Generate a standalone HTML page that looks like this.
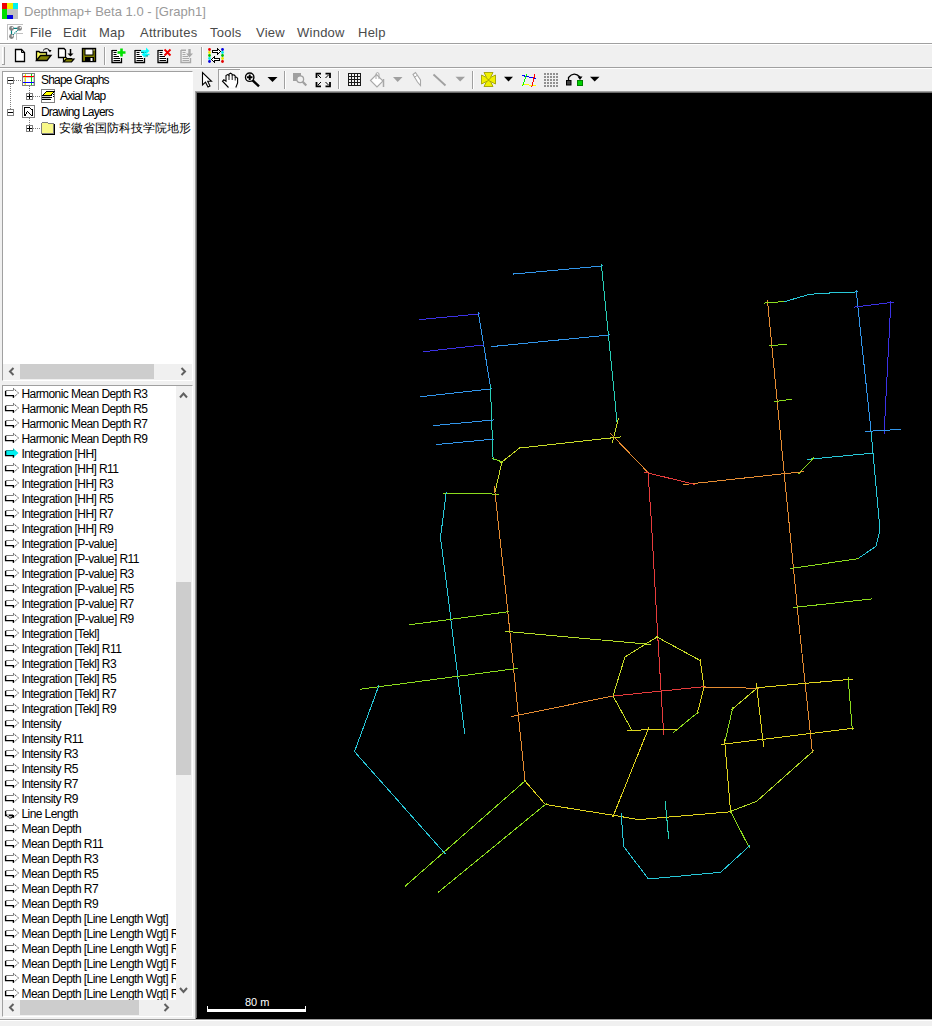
<!DOCTYPE html>
<html><head><meta charset="utf-8">
<style>
*{margin:0;padding:0;box-sizing:border-box}
html,body{width:932px;height:1026px;overflow:hidden;background:#f0f0f0;font-family:"Liberation Sans",sans-serif;position:relative}
.a{position:absolute}
.t{position:absolute;white-space:nowrap;line-height:1}
#title{left:0;top:0;width:932px;height:22px;background:#fff}
#menubar{left:0;top:22px;width:932px;height:21px;background:#fff}
.mi{position:absolute;top:25.5px;font-size:13px;letter-spacing:0.25px;color:#4a4a4a;white-space:nowrap;line-height:1}
.hl{position:absolute;left:0;width:932px;height:1px}
.panel{position:absolute;background:#fff;border-top:1px solid #a0a0a0;border-left:1px solid #a0a0a0;border-right:1px solid #fff;border-bottom:1px solid #fff}
.sbh{position:absolute;background:#f0f0f0}
.thumb{position:absolute;background:#cdcdcd}
.li{position:absolute;left:18.5px;font-size:12px;letter-spacing:-0.58px;color:#000;white-space:nowrap;line-height:1}
.tr{position:absolute;font-size:12px;letter-spacing:-0.8px;color:#000;white-space:nowrap;line-height:1}
</style></head>
<body>
<div id="title" class="a"></div>
<div class="t" style="left:24px;top:5px;font-size:13px;color:#9a9a9a">Depthmap+ Beta 1.0 - [Graph1]</div>
<svg class="a" style="left:0;top:0" width="30" height="42" viewBox="0 0 30 42" shape-rendering="crispEdges">
<rect x="2" y="3" width="16" height="16" fill="#c0c0c0"/>
<rect x="2" y="3" width="5" height="6" fill="#f00000"/><rect x="7" y="3" width="6" height="6" fill="#f0f000"/><rect x="13" y="3" width="5" height="6" fill="#00f0f0"/>
<rect x="2" y="9" width="5" height="10" fill="#00e000"/><rect x="7" y="15" width="6" height="4" fill="#0000e0"/>
</svg>
<div id="menubar" class="a"></div>
<svg class="a" style="left:4px;top:22px" width="22" height="20" viewBox="4 22 22 20">
<g shape-rendering="crispEdges" stroke="#c0c0c0"><path d="M7.5 24V40M7 24.5H23M16.5 33V40M16 33.5H23"/></g>
<path d="M11.5 28.4H19.5M11.5 28.4V36.5" stroke="#008080" stroke-width="1.2"/>
<path d="M19.5 28.4L11.5 36.5" stroke="#008080" stroke-width="1.2" stroke-dasharray="1.2 0.8"/>
<g fill="#808080"><circle cx="11.5" cy="28.4" r="2.4"/><circle cx="19.5" cy="28.4" r="2.4"/><circle cx="11.5" cy="36.5" r="2.4"/></g>
<g fill="#fff"><circle cx="12.3" cy="27.8" r="0.8"/><circle cx="20.3" cy="27.8" r="0.8"/><circle cx="12.3" cy="35.9" r="0.8"/></g>
</svg>
<div class="mi" style="left:30px">File</div>
<div class="mi" style="left:63px">Edit</div>
<div class="mi" style="left:99px">Map</div>
<div class="mi" style="left:140px">Attributes</div>
<div class="mi" style="left:210px">Tools</div>
<div class="mi" style="left:256px">View</div>
<div class="mi" style="left:297px">Window</div>
<div class="mi" style="left:358px">Help</div>
<div class="hl" style="top:43px;background:#a0a0a0"></div>
<div class="hl" style="top:44px;background:#fff"></div>
<div class="hl" style="top:67px;background:#a0a0a0"></div>
<div class="hl" style="top:68px;background:#fff"></div>

<!-- main toolbar -->
<svg class="a" style="left:0;top:44px" width="240" height="24" viewBox="0 44 240 24">
<g shape-rendering="crispEdges">
<path d="M2.5 47V65M3 64.5H5" stroke="#fff"/><path d="M4.5 47V65M2 64.5H5" stroke="#a0a0a0"/>
<path d="M104.5 47V65M201.5 47V65" stroke="#a0a0a0"/><path d="M105.5 47V65M202.5 47V65" stroke="#fff"/>
</g>
<!-- new -->
<path d="M15.5 49.5H21.5L24.5 52.5V61.5H15.5Z" fill="#fff" stroke="#000" stroke-width="1.3"/>
<path d="M21.5 49.5V52.5H24.5" fill="none" stroke="#000"/>
<!-- open -->
<path d="M36.5 60.5V51.5H39L40 52.5H46.5V55" fill="#ffff60" stroke="#000" stroke-width="1.3"/>
<path d="M36.5 60.5L40.5 55.5H51L47 60.5Z" fill="#808000" stroke="#000" stroke-width="1.3"/>
<path d="M43 50.5Q46 47 49.5 50" fill="none" stroke="#000"/><path d="M48 50H51.5L50 52.5Z" fill="#000"/>
<!-- import -->
<path d="M58.5 48.5H64L65.5 50V57.5H58.5Z" fill="#fff" stroke="#000" stroke-width="1.3"/>
<path d="M70.5 49V54.5" stroke="#000" stroke-width="1.5"/><path d="M67.5 53.5H73.5L70.5 56.5Z" fill="#000"/>
<path d="M63.5 62V57.5H66L67 58.5H71.5V60" fill="#ffff60" stroke="#000" stroke-width="1.2"/>
<path d="M63.5 62L66 59H74L71.5 62Z" fill="#808000" stroke="#000" stroke-width="1.2"/>
<!-- save -->
<rect x="82.5" y="48.5" width="13" height="13" fill="#808000" stroke="#000" stroke-width="1.4"/>
<rect x="85" y="49" width="8" height="6" fill="#fff" stroke="#000"/>
<rect x="85" y="57" width="9" height="5" fill="#000"/><rect x="90.5" y="58" width="2" height="3" fill="#fff"/>
<rect x="93.5" y="49.5" width="1" height="1" fill="#fff"/>
<!-- doc icons -->
<rect x="112.5" y="50.5" width="8" height="11" fill="#fff"/>
<path d="M112 50V62.5H121.5V58" fill="none" stroke="#000" stroke-width="1.3"/><path d="M112 50.5H117" stroke="#000" stroke-width="1.2"/>
<path d="M113.5 52.5H116.5M113.5 54.5H116.5M113.5 56.5H119M113.5 58.5H120M113.5 60.5H120" stroke="#000"/>
<path d="M121.5 48.5V56.5M117.5 52.5H125.5" stroke="#00e000" stroke-width="2.6"/>
<rect x="135.5" y="50.5" width="8" height="11" fill="#fff"/>
<path d="M135 50V62.5H144.5V58" fill="none" stroke="#000" stroke-width="1.3"/><path d="M135 50.5H141" stroke="#000" stroke-width="1.2"/>
<path d="M136.5 52.5H139.5M136.5 54.5H139.5M136.5 56.5H142M136.5 58.5H143M136.5 60.5H143" stroke="#000"/>
<path d="M141 52.3H146.5M143.5 55.8H148" stroke="#008080" stroke-width="1.2"/><path d="M141 51H147M143.5 54.5H149.5" stroke="#00ffff" stroke-width="1.6"/><path d="M146 47.5L149.5 51L146 54Z" fill="#00ffff"/><path d="M145.5 51.3L141.5 54.5L145.5 57.8Z" fill="#00ffff"/>
<rect x="158.5" y="50.5" width="8" height="11" fill="#fff"/>
<path d="M158 50V62.5H167.5V58" fill="none" stroke="#000" stroke-width="1.3"/><path d="M158 50.5H163" stroke="#000" stroke-width="1.2"/>
<path d="M159.5 52.5H162.5M159.5 54.5H162.5M159.5 56.5H165M159.5 58.5H166M159.5 60.5H166" stroke="#000"/>
<path d="M164.5 49.5L170.5 55.5M170.5 49.5L164.5 55.5" stroke="#f00000" stroke-width="1.9"/>
<path d="M181 50V62.5H190.5V58M181 50.3H186" fill="none" stroke="#a8a8a8" stroke-width="1.4"/>
<path d="M182.5 52.5H185.5M182.5 54.5H185.5M182.5 56.5H188M182.5 58.5H189M182.5 60.5H189" stroke="#a8a8a8"/>
<path d="M189.5 49V54" stroke="#a8a8a8" stroke-width="2.4"/><path d="M186 53.5H193L189.5 57.5Z" fill="#a8a8a8"/>
<!-- colour icon -->
<g stroke-width="0"><circle cx="209.5" cy="49.5" r="1.4" fill="#f00000"/><circle cx="209.5" cy="52.5" r="1.4" fill="#e8e800"/><circle cx="209.5" cy="55.5" r="1.4" fill="#00c000"/><circle cx="209.5" cy="58.5" r="1.4" fill="#00e8e8"/><circle cx="209.5" cy="61.5" r="1.4" fill="#0000e0"/>
<circle cx="222.5" cy="49.5" r="1.4" fill="#0000e0"/><circle cx="222.5" cy="52.5" r="1.4" fill="#00e8e8"/><circle cx="222.5" cy="55.5" r="1.4" fill="#00c000"/><circle cx="222.5" cy="58.5" r="1.4" fill="#e8e800"/><circle cx="222.5" cy="61.5" r="1.4" fill="#e00000"/></g>
<path d="M212.5 50.5H217.5V48.5L220.5 51.5L217.5 54.5V52.5H212.5Z" fill="#fff" stroke="#000" shape-rendering="crispEdges"/>
<path d="M219.5 58.5H214.5V56.5L211.5 59.5L214.5 62.5V60.5H219.5Z" fill="#fff" stroke="#000" shape-rendering="crispEdges"/>
</svg>
<!-- canvas toolbar -->
<svg class="a" style="left:196px;top:69px" width="420" height="22" viewBox="196 69 420 22">
<g shape-rendering="crispEdges">
<rect x="218" y="69" width="22" height="21" fill="#f8f8f8"/>
<path d="M218.5 69V90M218 69.5H240" stroke="#a0a0a0"/><path d="M239.5 70V90M219 89.5H240" stroke="#fff"/>
<path d="M284.5 71V89M338.5 71V89M472.5 71V89" stroke="#a0a0a0"/><path d="M285.5 71V89M339.5 71V89M473.5 71V89" stroke="#fff"/>
</g>
<path d="M202.5 72.5V85L205.5 82.2L208 87L210 86L207.7 81.3H211.5Z" fill="#fff" stroke="#000" stroke-width="1.1"/>
<path d="M228.5 87.5L222.5 81.2L223.8 79.8L226 81.3V75.5L227.6 74.6L229 75.5V74L230.6 73.2L232.2 74.2V75L234 74.8L235.2 76V77L236.6 77.2L237.6 78.5V83L235.8 87.5" fill="#fff" stroke="#000" stroke-width="1.1"/>
<path d="M229 75.5V80M232.2 75V80M235.2 77V80.5" stroke="#000" stroke-width="0.9"/>
<circle cx="249.7" cy="77.2" r="4.2" fill="#fff" stroke="#000" stroke-width="1.4"/>
<path d="M249.7 74.5V80M247 77.2H252.5" stroke="#000" stroke-width="2"/>
<path d="M252.6 80.3L259 86.3" stroke="#000" stroke-width="2.4"/>
<path d="M267.5 77H277.5L272.5 82Z" fill="#000"/>
<!-- disabled zoom sel -->
<rect x="293" y="73" width="8" height="8" fill="#a0a0a0"/>
<circle cx="300.2" cy="79.3" r="3.4" fill="#f0f0f0" stroke="#a0a0a0" stroke-width="1.3"/>
<path d="M302.7 81.8L306.3 85.6" stroke="#a0a0a0" stroke-width="2.2"/>
<!-- fit -->
<g fill="none" stroke="#000" stroke-width="1.8">
<path d="M316.5 78V73.7H321M330 78V73.7H325.5M316.5 82V86.3H321M330 82V86.3H325.5"/>
</g>
<g stroke="#000" stroke-width="1"><path d="M318 75L321 78M328.5 75L325.5 78M318 85L321 82M328.5 85L325.5 82"/></g>
<!-- grid -->
<g stroke="#1a1a1a" stroke-width="1" shape-rendering="crispEdges"><path d="M348.5 73V85M351.5 73V85M354.5 73V85M357.5 73V85M360.5 73V85M348 73.5H361M348 76.5H361M348 79.5H361M348 82.5H361M348 85.5H361"/></g>
<!-- bucket -->
<path d="M370.5 80.5L376.5 74.5L383 81L377 87Z" fill="#fff" stroke="#a8a8a8" stroke-width="1.1"/>
<path d="M376 79V73.5Q377.5 71.5 379 73.5V79" fill="none" stroke="#a8a8a8"/>
<path d="M383.5 79V87" stroke="#a8a8a8" stroke-width="1.5"/>
<path d="M393 77H402.5L397.7 82Z" fill="#a0a0a0"/>
<!-- pencil -->
<path d="M413 74.5L415.5 72.5L420.5 80V85.5L417.5 82Z" fill="#fff" stroke="#a8a8a8" stroke-width="1.1"/>
<path d="M414 77.5L417 75.5" stroke="#a8a8a8"/>
<path d="M433.5 74.5L445.5 85.5" stroke="#a0a0a0" stroke-width="1.8"/>
<path d="M455.5 76.7H465L460.2 81.5Z" fill="#a0a0a0"/>
<!-- yellow cross -->
<path d="M484 72.5H493L490.5 77.5L495.5 75V84L490.5 81.5L493 86.5H484L486.5 81.5L481.5 84V75L486.5 77.5Z" fill="#f0f000" stroke="#a0a000" stroke-width="0.9"/>
<path d="M486.5 78L490.5 82M490.5 78L486.5 82" stroke="#808000" stroke-width="0.7"/>
<path d="M504 76.7H513L508.5 81.5Z" fill="#000"/>
<!-- coloured square -->
<g stroke-width="1.1" shape-rendering="crispEdges"><path d="M522 75.5L536 78.5" stroke="#0000ff"/><path d="M522 84L536 86" stroke="#ffff00"/><path d="M526.7 74L522.5 86.5" stroke="#00ff00"/><path d="M534.8 74.5L531.8 86.8" stroke="#ff0000"/></g>
<!-- dot grid -->
<g fill="#909090">
<rect x="544" y="73" width="2" height="2"/><rect x="547" y="73" width="2" height="2"/><rect x="550" y="73" width="2" height="2"/><rect x="553" y="73" width="2" height="2"/><rect x="556" y="73" width="2" height="2"/>
<rect x="544" y="76" width="2" height="2"/><rect x="547" y="76" width="2" height="2"/><rect x="550" y="76" width="2" height="2"/><rect x="553" y="76" width="2" height="2"/><rect x="556" y="76" width="2" height="2"/>
<rect x="544" y="79" width="2" height="2"/><rect x="547" y="79" width="2" height="2"/><rect x="550" y="79" width="2" height="2"/><rect x="553" y="79" width="2" height="2"/><rect x="556" y="79" width="2" height="2"/>
<rect x="544" y="82" width="2" height="2"/><rect x="547" y="82" width="2" height="2"/><rect x="550" y="82" width="2" height="2"/><rect x="553" y="82" width="2" height="2"/><rect x="556" y="82" width="2" height="2"/>
<rect x="544" y="85" width="2" height="2"/><rect x="547" y="85" width="2" height="2"/><rect x="550" y="85" width="2" height="2"/><rect x="553" y="85" width="2" height="2"/><rect x="556" y="85" width="2" height="2"/>
</g>
<!-- link -->
<path d="M568.5 80V77.5Q574 71 580 77" fill="none" stroke="#000" stroke-width="1.3"/><path d="M577.5 76.5H582.5L580 80Z" fill="#000"/>
<rect x="566.5" y="80.5" width="4.5" height="4.5" fill="#404040" stroke="#000"/>
<rect x="577.5" y="80.5" width="5" height="5" fill="#00d000" stroke="#008000"/>
<path d="M590 76.7H599.5L594.7 81.5Z" fill="#000"/>
</svg>
<!-- tree panel -->
<div class="panel" style="left:2px;top:71px;width:191px;height:310px"></div>
<svg class="a" style="left:0;top:70px" width="193" height="70" viewBox="0 70 193 70" shape-rendering="crispEdges">
<g stroke="#808080" stroke-dasharray="1 1" stroke-width="1" fill="none">
<path d="M10.5 84V109M14 80.5H22M29.5 86V93M33 96.5H41M29.5 118V125M33 128.5H41"/>
</g>
<g fill="#fff" stroke="#808080">
<rect x="7.5" y="77.5" width="6" height="6"/><rect x="7.5" y="109.5" width="6" height="6"/>
<rect x="26.5" y="93.5" width="6" height="6"/><rect x="26.5" y="125.5" width="6" height="6"/>
</g>
<g stroke="#000"><path d="M8 80.5H13M8 112.5H13M27 96.5H32M29.5 94V99M27 128.5H32M29.5 126V131"/></g>
<!-- shape graphs icon -->
<rect x="22.5" y="73.5" width="12" height="12" fill="#fff" stroke="#808080"/>
<path d="M24 74.5V85M33 74.5V85M23 77.5H34M23 82.5H34" stroke="#d0d0d0"/>
<path d="M25.5 74V85" stroke="#f0f000"/><path d="M31.5 74V85" stroke="#00e000"/>
<path d="M23 76.5H34" stroke="#ff0000"/><path d="M23 82.5H34" stroke="#0000ff"/>
<!-- axial map icon -->
<rect x="41.5" y="89.5" width="13" height="13" fill="#fff" stroke="#808080"/>
<path d="M42 97.5H50.5M42 99.5H50.5" stroke="#000"/><path d="M42 96.5H50M42 98.5H50" stroke="#c8c8c8"/>
<path d="M50 97.5L54 93.5M50 99.5L54 95.5" stroke="#000" stroke-dasharray="1 1"/>
<path d="M42.5 95.5L46.5 91.5H54.5L50.5 95.5Z" fill="#ffff00" stroke="#000"/>
<!-- drawing layers icon -->
<rect x="22.5" y="105.5" width="12" height="12" fill="#fff" stroke="#808080"/>
<path d="M24.5 115.5V107.5H29.5L31.5 109.5H32.5V115.5H31.5L27.5 111.5L25 115.5" fill="none" stroke="#000"/>
<!-- folder icon -->
<path d="M41.5 123.5L43 122H47L48.5 123.5H53.5V133.5H41.5Z" fill="#f8f888" stroke="#808080"/>
<path d="M42 134.5H55M54.5 124V134" stroke="#000"/>
</svg>
<div class="tr" style="left:41px;top:73.5px">Shape Graphs</div>
<div class="tr" style="left:60px;top:89.5px">Axial Map</div>
<div class="tr" style="left:41px;top:105.5px">Drawing Layers</div>
<div class="a" style="left:59px;top:121px;width:133px;height:16px;overflow:hidden;font-size:12px;line-height:14px;white-space:nowrap;color:#000">安徽省国防科技学院地形</div>
<div class="sbh" style="left:3px;top:364px;width:189px;height:16px"></div>
<div class="thumb" style="left:20px;top:364px;width:134px;height:15px"></div>

<!-- list panel -->
<div class="panel" style="left:2px;top:385px;width:191px;height:632px"></div>
<div class="sbh" style="left:176px;top:386px;width:16px;height:630px"></div>
<div class="thumb" style="left:176px;top:582px;width:15px;height:193px"></div>
<div class="sbh" style="left:3px;top:1000px;width:173px;height:16px"></div>
<div class="thumb" style="left:20px;top:1000px;width:119px;height:15px"></div>

<div class="a" style="left:3px;top:386px;width:173px;height:614px;overflow:hidden">
<div class="li" style="top:1.5px">Harmonic Mean Depth R3</div>
<div class="li" style="top:16.5px">Harmonic Mean Depth R5</div>
<div class="li" style="top:31.5px">Harmonic Mean Depth R7</div>
<div class="li" style="top:46.5px">Harmonic Mean Depth R9</div>
<div class="li" style="top:61.5px">Integration [HH]</div>
<div class="li" style="top:76.5px">Integration [HH] R11</div>
<div class="li" style="top:91.5px">Integration [HH] R3</div>
<div class="li" style="top:106.5px">Integration [HH] R5</div>
<div class="li" style="top:121.5px">Integration [HH] R7</div>
<div class="li" style="top:136.5px">Integration [HH] R9</div>
<div class="li" style="top:151.5px">Integration [P-value]</div>
<div class="li" style="top:166.5px">Integration [P-value] R11</div>
<div class="li" style="top:181.5px">Integration [P-value] R3</div>
<div class="li" style="top:196.5px">Integration [P-value] R5</div>
<div class="li" style="top:211.5px">Integration [P-value] R7</div>
<div class="li" style="top:226.5px">Integration [P-value] R9</div>
<div class="li" style="top:241.5px">Integration [Tekl]</div>
<div class="li" style="top:256.5px">Integration [Tekl] R11</div>
<div class="li" style="top:271.5px">Integration [Tekl] R3</div>
<div class="li" style="top:286.5px">Integration [Tekl] R5</div>
<div class="li" style="top:301.5px">Integration [Tekl] R7</div>
<div class="li" style="top:316.5px">Integration [Tekl] R9</div>
<div class="li" style="top:331.5px">Intensity</div>
<div class="li" style="top:346.5px">Intensity R11</div>
<div class="li" style="top:361.5px">Intensity R3</div>
<div class="li" style="top:376.5px">Intensity R5</div>
<div class="li" style="top:391.5px">Intensity R7</div>
<div class="li" style="top:406.5px">Intensity R9</div>
<div class="li" style="top:421.5px">Line Length</div>
<div class="li" style="top:436.5px">Mean Depth</div>
<div class="li" style="top:451.5px">Mean Depth R11</div>
<div class="li" style="top:466.5px">Mean Depth R3</div>
<div class="li" style="top:481.5px">Mean Depth R5</div>
<div class="li" style="top:496.5px">Mean Depth R7</div>
<div class="li" style="top:511.5px">Mean Depth R9</div>
<div class="li" style="top:526.5px">Mean Depth [Line Length Wgt]</div>
<div class="li" style="top:541.5px">Mean Depth [Line Length Wgt] R11</div>
<div class="li" style="top:556.5px">Mean Depth [Line Length Wgt] R11</div>
<div class="li" style="top:571.5px">Mean Depth [Line Length Wgt] R11</div>
<div class="li" style="top:586.5px">Mean Depth [Line Length Wgt] R11</div>
<div class="li" style="top:601.5px">Mean Depth [Line Length Wgt] R11</div>
</div>
<svg class="a" style="left:3px;top:386px" width="173" height="614" viewBox="3 386 173 614">
<g transform="translate(5 388)"><path d="M1 2.5H8.5V0.5L13.5 5L8.5 9.5V7.5H1Z" fill="#fff"/><path d="M1 2.5H8.5V0.5" fill="none" stroke="#808080" stroke-width="1"/><path d="M8.5 0.5L13.5 5L8.5 9.5" fill="none" stroke="#303030" stroke-width="1" stroke-dasharray="1.2 0.9"/><path d="M0.6 2.8V7.6H8.4V9.8" fill="none" stroke="#000" stroke-width="1.4"/></g>
<g transform="translate(5 403)"><path d="M1 2.5H8.5V0.5L13.5 5L8.5 9.5V7.5H1Z" fill="#fff"/><path d="M1 2.5H8.5V0.5" fill="none" stroke="#808080" stroke-width="1"/><path d="M8.5 0.5L13.5 5L8.5 9.5" fill="none" stroke="#303030" stroke-width="1" stroke-dasharray="1.2 0.9"/><path d="M0.6 2.8V7.6H8.4V9.8" fill="none" stroke="#000" stroke-width="1.4"/></g>
<g transform="translate(5 418)"><path d="M1 2.5H8.5V0.5L13.5 5L8.5 9.5V7.5H1Z" fill="#fff"/><path d="M1 2.5H8.5V0.5" fill="none" stroke="#808080" stroke-width="1"/><path d="M8.5 0.5L13.5 5L8.5 9.5" fill="none" stroke="#303030" stroke-width="1" stroke-dasharray="1.2 0.9"/><path d="M0.6 2.8V7.6H8.4V9.8" fill="none" stroke="#000" stroke-width="1.4"/></g>
<g transform="translate(5 433)"><path d="M1 2.5H8.5V0.5L13.5 5L8.5 9.5V7.5H1Z" fill="#fff"/><path d="M1 2.5H8.5V0.5" fill="none" stroke="#808080" stroke-width="1"/><path d="M8.5 0.5L13.5 5L8.5 9.5" fill="none" stroke="#303030" stroke-width="1" stroke-dasharray="1.2 0.9"/><path d="M0.6 2.8V7.6H8.4V9.8" fill="none" stroke="#000" stroke-width="1.4"/></g>
<g transform="translate(5 448)"><path d="M1 2.5H8.5V0.5L13.5 5L8.5 9.5V7.5H1Z" fill="#00f0f0"/><path d="M1 2.5H8.5V0.5" fill="none" stroke="#008080" stroke-width="0.8"/><path d="M0.6 2.8V7.6H8.4V9.8" fill="none" stroke="#000" stroke-width="1.4"/></g>
<g transform="translate(5 463)"><path d="M1 2.5H8.5V0.5L13.5 5L8.5 9.5V7.5H1Z" fill="#fff"/><path d="M1 2.5H8.5V0.5" fill="none" stroke="#808080" stroke-width="1"/><path d="M8.5 0.5L13.5 5L8.5 9.5" fill="none" stroke="#303030" stroke-width="1" stroke-dasharray="1.2 0.9"/><path d="M0.6 2.8V7.6H8.4V9.8" fill="none" stroke="#000" stroke-width="1.4"/></g>
<g transform="translate(5 478)"><path d="M1 2.5H8.5V0.5L13.5 5L8.5 9.5V7.5H1Z" fill="#fff"/><path d="M1 2.5H8.5V0.5" fill="none" stroke="#808080" stroke-width="1"/><path d="M8.5 0.5L13.5 5L8.5 9.5" fill="none" stroke="#303030" stroke-width="1" stroke-dasharray="1.2 0.9"/><path d="M0.6 2.8V7.6H8.4V9.8" fill="none" stroke="#000" stroke-width="1.4"/></g>
<g transform="translate(5 493)"><path d="M1 2.5H8.5V0.5L13.5 5L8.5 9.5V7.5H1Z" fill="#fff"/><path d="M1 2.5H8.5V0.5" fill="none" stroke="#808080" stroke-width="1"/><path d="M8.5 0.5L13.5 5L8.5 9.5" fill="none" stroke="#303030" stroke-width="1" stroke-dasharray="1.2 0.9"/><path d="M0.6 2.8V7.6H8.4V9.8" fill="none" stroke="#000" stroke-width="1.4"/></g>
<g transform="translate(5 508)"><path d="M1 2.5H8.5V0.5L13.5 5L8.5 9.5V7.5H1Z" fill="#fff"/><path d="M1 2.5H8.5V0.5" fill="none" stroke="#808080" stroke-width="1"/><path d="M8.5 0.5L13.5 5L8.5 9.5" fill="none" stroke="#303030" stroke-width="1" stroke-dasharray="1.2 0.9"/><path d="M0.6 2.8V7.6H8.4V9.8" fill="none" stroke="#000" stroke-width="1.4"/></g>
<g transform="translate(5 523)"><path d="M1 2.5H8.5V0.5L13.5 5L8.5 9.5V7.5H1Z" fill="#fff"/><path d="M1 2.5H8.5V0.5" fill="none" stroke="#808080" stroke-width="1"/><path d="M8.5 0.5L13.5 5L8.5 9.5" fill="none" stroke="#303030" stroke-width="1" stroke-dasharray="1.2 0.9"/><path d="M0.6 2.8V7.6H8.4V9.8" fill="none" stroke="#000" stroke-width="1.4"/></g>
<g transform="translate(5 538)"><path d="M1 2.5H8.5V0.5L13.5 5L8.5 9.5V7.5H1Z" fill="#fff"/><path d="M1 2.5H8.5V0.5" fill="none" stroke="#808080" stroke-width="1"/><path d="M8.5 0.5L13.5 5L8.5 9.5" fill="none" stroke="#303030" stroke-width="1" stroke-dasharray="1.2 0.9"/><path d="M0.6 2.8V7.6H8.4V9.8" fill="none" stroke="#000" stroke-width="1.4"/></g>
<g transform="translate(5 553)"><path d="M1 2.5H8.5V0.5L13.5 5L8.5 9.5V7.5H1Z" fill="#fff"/><path d="M1 2.5H8.5V0.5" fill="none" stroke="#808080" stroke-width="1"/><path d="M8.5 0.5L13.5 5L8.5 9.5" fill="none" stroke="#303030" stroke-width="1" stroke-dasharray="1.2 0.9"/><path d="M0.6 2.8V7.6H8.4V9.8" fill="none" stroke="#000" stroke-width="1.4"/></g>
<g transform="translate(5 568)"><path d="M1 2.5H8.5V0.5L13.5 5L8.5 9.5V7.5H1Z" fill="#fff"/><path d="M1 2.5H8.5V0.5" fill="none" stroke="#808080" stroke-width="1"/><path d="M8.5 0.5L13.5 5L8.5 9.5" fill="none" stroke="#303030" stroke-width="1" stroke-dasharray="1.2 0.9"/><path d="M0.6 2.8V7.6H8.4V9.8" fill="none" stroke="#000" stroke-width="1.4"/></g>
<g transform="translate(5 583)"><path d="M1 2.5H8.5V0.5L13.5 5L8.5 9.5V7.5H1Z" fill="#fff"/><path d="M1 2.5H8.5V0.5" fill="none" stroke="#808080" stroke-width="1"/><path d="M8.5 0.5L13.5 5L8.5 9.5" fill="none" stroke="#303030" stroke-width="1" stroke-dasharray="1.2 0.9"/><path d="M0.6 2.8V7.6H8.4V9.8" fill="none" stroke="#000" stroke-width="1.4"/></g>
<g transform="translate(5 598)"><path d="M1 2.5H8.5V0.5L13.5 5L8.5 9.5V7.5H1Z" fill="#fff"/><path d="M1 2.5H8.5V0.5" fill="none" stroke="#808080" stroke-width="1"/><path d="M8.5 0.5L13.5 5L8.5 9.5" fill="none" stroke="#303030" stroke-width="1" stroke-dasharray="1.2 0.9"/><path d="M0.6 2.8V7.6H8.4V9.8" fill="none" stroke="#000" stroke-width="1.4"/></g>
<g transform="translate(5 613)"><path d="M1 2.5H8.5V0.5L13.5 5L8.5 9.5V7.5H1Z" fill="#fff"/><path d="M1 2.5H8.5V0.5" fill="none" stroke="#808080" stroke-width="1"/><path d="M8.5 0.5L13.5 5L8.5 9.5" fill="none" stroke="#303030" stroke-width="1" stroke-dasharray="1.2 0.9"/><path d="M0.6 2.8V7.6H8.4V9.8" fill="none" stroke="#000" stroke-width="1.4"/></g>
<g transform="translate(5 628)"><path d="M1 2.5H8.5V0.5L13.5 5L8.5 9.5V7.5H1Z" fill="#fff"/><path d="M1 2.5H8.5V0.5" fill="none" stroke="#808080" stroke-width="1"/><path d="M8.5 0.5L13.5 5L8.5 9.5" fill="none" stroke="#303030" stroke-width="1" stroke-dasharray="1.2 0.9"/><path d="M0.6 2.8V7.6H8.4V9.8" fill="none" stroke="#000" stroke-width="1.4"/></g>
<g transform="translate(5 643)"><path d="M1 2.5H8.5V0.5L13.5 5L8.5 9.5V7.5H1Z" fill="#fff"/><path d="M1 2.5H8.5V0.5" fill="none" stroke="#808080" stroke-width="1"/><path d="M8.5 0.5L13.5 5L8.5 9.5" fill="none" stroke="#303030" stroke-width="1" stroke-dasharray="1.2 0.9"/><path d="M0.6 2.8V7.6H8.4V9.8" fill="none" stroke="#000" stroke-width="1.4"/></g>
<g transform="translate(5 658)"><path d="M1 2.5H8.5V0.5L13.5 5L8.5 9.5V7.5H1Z" fill="#fff"/><path d="M1 2.5H8.5V0.5" fill="none" stroke="#808080" stroke-width="1"/><path d="M8.5 0.5L13.5 5L8.5 9.5" fill="none" stroke="#303030" stroke-width="1" stroke-dasharray="1.2 0.9"/><path d="M0.6 2.8V7.6H8.4V9.8" fill="none" stroke="#000" stroke-width="1.4"/></g>
<g transform="translate(5 673)"><path d="M1 2.5H8.5V0.5L13.5 5L8.5 9.5V7.5H1Z" fill="#fff"/><path d="M1 2.5H8.5V0.5" fill="none" stroke="#808080" stroke-width="1"/><path d="M8.5 0.5L13.5 5L8.5 9.5" fill="none" stroke="#303030" stroke-width="1" stroke-dasharray="1.2 0.9"/><path d="M0.6 2.8V7.6H8.4V9.8" fill="none" stroke="#000" stroke-width="1.4"/></g>
<g transform="translate(5 688)"><path d="M1 2.5H8.5V0.5L13.5 5L8.5 9.5V7.5H1Z" fill="#fff"/><path d="M1 2.5H8.5V0.5" fill="none" stroke="#808080" stroke-width="1"/><path d="M8.5 0.5L13.5 5L8.5 9.5" fill="none" stroke="#303030" stroke-width="1" stroke-dasharray="1.2 0.9"/><path d="M0.6 2.8V7.6H8.4V9.8" fill="none" stroke="#000" stroke-width="1.4"/></g>
<g transform="translate(5 703)"><path d="M1 2.5H8.5V0.5L13.5 5L8.5 9.5V7.5H1Z" fill="#fff"/><path d="M1 2.5H8.5V0.5" fill="none" stroke="#808080" stroke-width="1"/><path d="M8.5 0.5L13.5 5L8.5 9.5" fill="none" stroke="#303030" stroke-width="1" stroke-dasharray="1.2 0.9"/><path d="M0.6 2.8V7.6H8.4V9.8" fill="none" stroke="#000" stroke-width="1.4"/></g>
<g transform="translate(5 718)"><path d="M1 2.5H8.5V0.5L13.5 5L8.5 9.5V7.5H1Z" fill="#fff"/><path d="M1 2.5H8.5V0.5" fill="none" stroke="#808080" stroke-width="1"/><path d="M8.5 0.5L13.5 5L8.5 9.5" fill="none" stroke="#303030" stroke-width="1" stroke-dasharray="1.2 0.9"/><path d="M0.6 2.8V7.6H8.4V9.8" fill="none" stroke="#000" stroke-width="1.4"/></g>
<g transform="translate(5 733)"><path d="M1 2.5H8.5V0.5L13.5 5L8.5 9.5V7.5H1Z" fill="#fff"/><path d="M1 2.5H8.5V0.5" fill="none" stroke="#808080" stroke-width="1"/><path d="M8.5 0.5L13.5 5L8.5 9.5" fill="none" stroke="#303030" stroke-width="1" stroke-dasharray="1.2 0.9"/><path d="M0.6 2.8V7.6H8.4V9.8" fill="none" stroke="#000" stroke-width="1.4"/></g>
<g transform="translate(5 748)"><path d="M1 2.5H8.5V0.5L13.5 5L8.5 9.5V7.5H1Z" fill="#fff"/><path d="M1 2.5H8.5V0.5" fill="none" stroke="#808080" stroke-width="1"/><path d="M8.5 0.5L13.5 5L8.5 9.5" fill="none" stroke="#303030" stroke-width="1" stroke-dasharray="1.2 0.9"/><path d="M0.6 2.8V7.6H8.4V9.8" fill="none" stroke="#000" stroke-width="1.4"/></g>
<g transform="translate(5 763)"><path d="M1 2.5H8.5V0.5L13.5 5L8.5 9.5V7.5H1Z" fill="#fff"/><path d="M1 2.5H8.5V0.5" fill="none" stroke="#808080" stroke-width="1"/><path d="M8.5 0.5L13.5 5L8.5 9.5" fill="none" stroke="#303030" stroke-width="1" stroke-dasharray="1.2 0.9"/><path d="M0.6 2.8V7.6H8.4V9.8" fill="none" stroke="#000" stroke-width="1.4"/></g>
<g transform="translate(5 778)"><path d="M1 2.5H8.5V0.5L13.5 5L8.5 9.5V7.5H1Z" fill="#fff"/><path d="M1 2.5H8.5V0.5" fill="none" stroke="#808080" stroke-width="1"/><path d="M8.5 0.5L13.5 5L8.5 9.5" fill="none" stroke="#303030" stroke-width="1" stroke-dasharray="1.2 0.9"/><path d="M0.6 2.8V7.6H8.4V9.8" fill="none" stroke="#000" stroke-width="1.4"/></g>
<g transform="translate(5 793)"><path d="M1 2.5H8.5V0.5L13.5 5L8.5 9.5V7.5H1Z" fill="#fff"/><path d="M1 2.5H8.5V0.5" fill="none" stroke="#808080" stroke-width="1"/><path d="M8.5 0.5L13.5 5L8.5 9.5" fill="none" stroke="#303030" stroke-width="1" stroke-dasharray="1.2 0.9"/><path d="M0.6 2.8V7.6H8.4V9.8" fill="none" stroke="#000" stroke-width="1.4"/></g>
<g transform="translate(5 808)"><path d="M1 2.5H8.5V0.5L13.5 5L8.5 9.5V7.5H1Z" fill="#fff"/><path d="M1 2.5H8.5V0.5" fill="none" stroke="#808080" stroke-width="1"/><path d="M8.5 0.5L13.5 5L8.5 9.5" fill="none" stroke="#303030" stroke-width="1" stroke-dasharray="1.2 0.9"/><path d="M0.6 2.8V7.6H8.4V9.8" fill="none" stroke="#000" stroke-width="1.4"/><path d="M1.5 6.5L3 8.5L3.5 9.5M4 7H7.5V9L6 10H4" fill="none" stroke="#000" stroke-width="1.1"/><rect x="2" y="6" width="2" height="2" fill="#c0c0c0"/></g>
<g transform="translate(5 823)"><path d="M1 2.5H8.5V0.5L13.5 5L8.5 9.5V7.5H1Z" fill="#fff"/><path d="M1 2.5H8.5V0.5" fill="none" stroke="#808080" stroke-width="1"/><path d="M8.5 0.5L13.5 5L8.5 9.5" fill="none" stroke="#303030" stroke-width="1" stroke-dasharray="1.2 0.9"/><path d="M0.6 2.8V7.6H8.4V9.8" fill="none" stroke="#000" stroke-width="1.4"/></g>
<g transform="translate(5 838)"><path d="M1 2.5H8.5V0.5L13.5 5L8.5 9.5V7.5H1Z" fill="#fff"/><path d="M1 2.5H8.5V0.5" fill="none" stroke="#808080" stroke-width="1"/><path d="M8.5 0.5L13.5 5L8.5 9.5" fill="none" stroke="#303030" stroke-width="1" stroke-dasharray="1.2 0.9"/><path d="M0.6 2.8V7.6H8.4V9.8" fill="none" stroke="#000" stroke-width="1.4"/></g>
<g transform="translate(5 853)"><path d="M1 2.5H8.5V0.5L13.5 5L8.5 9.5V7.5H1Z" fill="#fff"/><path d="M1 2.5H8.5V0.5" fill="none" stroke="#808080" stroke-width="1"/><path d="M8.5 0.5L13.5 5L8.5 9.5" fill="none" stroke="#303030" stroke-width="1" stroke-dasharray="1.2 0.9"/><path d="M0.6 2.8V7.6H8.4V9.8" fill="none" stroke="#000" stroke-width="1.4"/></g>
<g transform="translate(5 868)"><path d="M1 2.5H8.5V0.5L13.5 5L8.5 9.5V7.5H1Z" fill="#fff"/><path d="M1 2.5H8.5V0.5" fill="none" stroke="#808080" stroke-width="1"/><path d="M8.5 0.5L13.5 5L8.5 9.5" fill="none" stroke="#303030" stroke-width="1" stroke-dasharray="1.2 0.9"/><path d="M0.6 2.8V7.6H8.4V9.8" fill="none" stroke="#000" stroke-width="1.4"/></g>
<g transform="translate(5 883)"><path d="M1 2.5H8.5V0.5L13.5 5L8.5 9.5V7.5H1Z" fill="#fff"/><path d="M1 2.5H8.5V0.5" fill="none" stroke="#808080" stroke-width="1"/><path d="M8.5 0.5L13.5 5L8.5 9.5" fill="none" stroke="#303030" stroke-width="1" stroke-dasharray="1.2 0.9"/><path d="M0.6 2.8V7.6H8.4V9.8" fill="none" stroke="#000" stroke-width="1.4"/></g>
<g transform="translate(5 898)"><path d="M1 2.5H8.5V0.5L13.5 5L8.5 9.5V7.5H1Z" fill="#fff"/><path d="M1 2.5H8.5V0.5" fill="none" stroke="#808080" stroke-width="1"/><path d="M8.5 0.5L13.5 5L8.5 9.5" fill="none" stroke="#303030" stroke-width="1" stroke-dasharray="1.2 0.9"/><path d="M0.6 2.8V7.6H8.4V9.8" fill="none" stroke="#000" stroke-width="1.4"/></g>
<g transform="translate(5 913)"><path d="M1 2.5H8.5V0.5L13.5 5L8.5 9.5V7.5H1Z" fill="#fff"/><path d="M1 2.5H8.5V0.5" fill="none" stroke="#808080" stroke-width="1"/><path d="M8.5 0.5L13.5 5L8.5 9.5" fill="none" stroke="#303030" stroke-width="1" stroke-dasharray="1.2 0.9"/><path d="M0.6 2.8V7.6H8.4V9.8" fill="none" stroke="#000" stroke-width="1.4"/></g>
<g transform="translate(5 928)"><path d="M1 2.5H8.5V0.5L13.5 5L8.5 9.5V7.5H1Z" fill="#fff"/><path d="M1 2.5H8.5V0.5" fill="none" stroke="#808080" stroke-width="1"/><path d="M8.5 0.5L13.5 5L8.5 9.5" fill="none" stroke="#303030" stroke-width="1" stroke-dasharray="1.2 0.9"/><path d="M0.6 2.8V7.6H8.4V9.8" fill="none" stroke="#000" stroke-width="1.4"/></g>
<g transform="translate(5 943)"><path d="M1 2.5H8.5V0.5L13.5 5L8.5 9.5V7.5H1Z" fill="#fff"/><path d="M1 2.5H8.5V0.5" fill="none" stroke="#808080" stroke-width="1"/><path d="M8.5 0.5L13.5 5L8.5 9.5" fill="none" stroke="#303030" stroke-width="1" stroke-dasharray="1.2 0.9"/><path d="M0.6 2.8V7.6H8.4V9.8" fill="none" stroke="#000" stroke-width="1.4"/></g>
<g transform="translate(5 958)"><path d="M1 2.5H8.5V0.5L13.5 5L8.5 9.5V7.5H1Z" fill="#fff"/><path d="M1 2.5H8.5V0.5" fill="none" stroke="#808080" stroke-width="1"/><path d="M8.5 0.5L13.5 5L8.5 9.5" fill="none" stroke="#303030" stroke-width="1" stroke-dasharray="1.2 0.9"/><path d="M0.6 2.8V7.6H8.4V9.8" fill="none" stroke="#000" stroke-width="1.4"/></g>
<g transform="translate(5 973)"><path d="M1 2.5H8.5V0.5L13.5 5L8.5 9.5V7.5H1Z" fill="#fff"/><path d="M1 2.5H8.5V0.5" fill="none" stroke="#808080" stroke-width="1"/><path d="M8.5 0.5L13.5 5L8.5 9.5" fill="none" stroke="#303030" stroke-width="1" stroke-dasharray="1.2 0.9"/><path d="M0.6 2.8V7.6H8.4V9.8" fill="none" stroke="#000" stroke-width="1.4"/></g>
<g transform="translate(5 988)"><path d="M1 2.5H8.5V0.5L13.5 5L8.5 9.5V7.5H1Z" fill="#fff"/><path d="M1 2.5H8.5V0.5" fill="none" stroke="#808080" stroke-width="1"/><path d="M8.5 0.5L13.5 5L8.5 9.5" fill="none" stroke="#303030" stroke-width="1" stroke-dasharray="1.2 0.9"/><path d="M0.6 2.8V7.6H8.4V9.8" fill="none" stroke="#000" stroke-width="1.4"/></g>
</svg>
<!-- canvas -->
<div class="a" style="left:195px;top:91px;width:737px;height:928px;background:#000;border-top:1px solid #a0a0a0;border-left:1px solid #a0a0a0"></div>
<div class="a" style="left:196px;top:92px;width:736px;height:1px;background:#696969"></div>
<div class="a" style="left:196px;top:92px;width:1px;height:926px;background:#696969"></div>

<!--MAP--><svg class="a" style="left:0;top:0" width="932" height="1026" viewBox="0 0 932 1026" shape-rendering="crispEdges">
<polyline points="512.5,274.1 603.5,265.9" fill="none" stroke="#3296eb" stroke-width="1"/>
<polyline points="601.4,264.5 617.1,422.5" fill="none" stroke="#28d0b8" stroke-width="1"/>
<polyline points="491.5,346.6 610.5,334.9" fill="none" stroke="#3296eb" stroke-width="1"/>
<polyline points="419.5,319.6 480.0,313.9" fill="none" stroke="#3c32e6" stroke-width="1"/>
<polyline points="478.3,312.5 490.7,388.0" fill="none" stroke="#3296eb" stroke-width="1"/>
<polyline points="423.5,351.7 484.5,344.8" fill="none" stroke="#3c32e6" stroke-width="1"/>
<polyline points="420.5,396.7 492.0,388.8" fill="none" stroke="#3296eb" stroke-width="1"/>
<polyline points="490.4,385.0 493.1,460.0" fill="none" stroke="#28d0b8" stroke-width="1"/>
<polyline points="433.5,425.6 494.0,419.9" fill="none" stroke="#3296eb" stroke-width="1"/>
<polyline points="435.8,444.6 493.9,439.1" fill="none" stroke="#3296eb" stroke-width="1"/>
<polyline points="491.6,458.0 503.4,462.5" fill="none" stroke="#8cdc1e" stroke-width="1"/>
<polyline points="500.8,462.9 519.5,448.0 621.5,436.8" fill="none" stroke="#c8dc28" stroke-width="1"/>
<polyline points="618.7,417.8 612.3,442.5" fill="none" stroke="#c8dc28" stroke-width="1"/>
<polyline points="610.0,432.9 649.0,473.5" fill="none" stroke="#e68c32" stroke-width="1"/>
<polyline points="502.3,460.5 494.7,493.5" fill="none" stroke="#c8dc28" stroke-width="1"/>
<polyline points="443.2,493.5 472.0,493.5 499.1,494.2" fill="none" stroke="#8cdc1e" stroke-width="1"/>
<polyline points="494.3,486.5 505.6,590.0 525.2,782.5" fill="none" stroke="#e68c32" stroke-width="1"/>
<polyline points="446.2,492.3 440.5,537.6 447.3,590.0 464.7,734.1" fill="none" stroke="#28c8d8" stroke-width="1"/>
<polyline points="767.4,300.0 780.0,430.0 798.5,620.0 812.5,753.5" fill="none" stroke="#e68c32" stroke-width="1"/>
<polyline points="763.5,303.1 786.7,301.4" fill="none" stroke="#8cdc1e" stroke-width="1"/>
<polyline points="783.8,301.9 808.4,294.6 819.5,293.4 857.9,291.9" fill="none" stroke="#28c8d8" stroke-width="1"/>
<polyline points="856.2,290.5 871.2,432.5" fill="none" stroke="#3296eb" stroke-width="1"/>
<polyline points="870.9,429.5 880.0,530.0 876.0,546.3 856.6,559.5" fill="none" stroke="#28c8d8" stroke-width="1"/>
<polyline points="853.5,307.2 894.0,302.1" fill="none" stroke="#3c32e6" stroke-width="1"/>
<polyline points="890.9,300.8 884.1,433.5" fill="none" stroke="#3c32e6" stroke-width="1"/>
<polyline points="864.7,431.5 901.4,429.3" fill="none" stroke="#3296eb" stroke-width="1"/>
<polyline points="768.8,345.7 786.7,344.3" fill="none" stroke="#8cdc1e" stroke-width="1"/>
<polyline points="773.7,401.7 792.4,399.1" fill="none" stroke="#8cdc1e" stroke-width="1"/>
<polyline points="807.2,459.4 874.1,453.0" fill="none" stroke="#28c8d8" stroke-width="1"/>
<polyline points="798.4,474.1 814.0,457.6" fill="none" stroke="#8cdc1e" stroke-width="1"/>
<polyline points="682.8,484.7 804.5,471.5" fill="none" stroke="#e68c32" stroke-width="1"/>
<polyline points="644.1,472.0 694.6,484.4" fill="none" stroke="#e63c3c" stroke-width="1"/>
<polyline points="647.9,470.9 651.3,520.0 657.8,637.0 663.7,734.5" fill="none" stroke="#e63c3c" stroke-width="1"/>
<polyline points="859.3,558.5 789.6,568.7" fill="none" stroke="#8cdc1e" stroke-width="1"/>
<polyline points="792.9,607.6 872.2,598.9" fill="none" stroke="#8cdc1e" stroke-width="1"/>
<polyline points="408.6,624.9 509.2,611.6" fill="none" stroke="#8cdc1e" stroke-width="1"/>
<polyline points="504.7,631.3 651.5,644.5" fill="none" stroke="#b4dc28" stroke-width="1"/>
<polyline points="359.6,689.3 518.2,668.3" fill="none" stroke="#8cdc1e" stroke-width="1"/>
<polyline points="379.2,684.7 354.5,751.6 445.2,853.9" fill="none" stroke="#28c8d8" stroke-width="1"/>
<polyline points="511.3,716.6 614.5,695.7" fill="none" stroke="#e68c32" stroke-width="1"/>
<polyline points="611.5,696.2 705.6,686.5" fill="none" stroke="#e63c3c" stroke-width="1"/>
<polyline points="702.5,687.0 759.0,688.3" fill="none" stroke="#e68c32" stroke-width="1"/>
<polyline points="655.7,636.3 701.5,661.2" fill="none" stroke="#c8dc28" stroke-width="1"/>
<polyline points="700.0,659.0 704.1,687.0 697.0,714.3" fill="none" stroke="#e0d41e" stroke-width="1"/>
<polyline points="698.6,711.8 672.5,733.3" fill="none" stroke="#8cdc1e" stroke-width="1"/>
<polyline points="678.0,729.5 626.9,730.2" fill="none" stroke="#e0d41e" stroke-width="1"/>
<polyline points="632.5,731.5 613.0,696.0 624.9,657.0 658.3,636.2" fill="none" stroke="#c8dc28" stroke-width="1"/>
<polyline points="649.2,726.7 612.9,816.7" fill="none" stroke="#e0d41e" stroke-width="1"/>
<polyline points="756.0,687.8 852.9,679.1" fill="none" stroke="#e0d41e" stroke-width="1"/>
<polyline points="848.0,676.7 852.4,730.5" fill="none" stroke="#8cdc1e" stroke-width="1"/>
<polyline points="853.8,728.2 720.8,744.5" fill="none" stroke="#e0d41e" stroke-width="1"/>
<polyline points="756.3,683.1 763.7,747.2" fill="none" stroke="#e0d41e" stroke-width="1"/>
<polyline points="758.6,686.7 731.4,709.9" fill="none" stroke="#c8dc28" stroke-width="1"/>
<polyline points="732.8,707.4 724.3,744.5" fill="none" stroke="#8cdc1e" stroke-width="1"/>
<polyline points="724.5,738.8 730.7,812.9" fill="none" stroke="#e0d41e" stroke-width="1"/>
<polyline points="814.2,750.2 756.5,801.4 729.2,811.9" fill="none" stroke="#b4dc28" stroke-width="1"/>
<polyline points="524.0,779.9 545.4,804.5 613.5,815.3 638.6,819.6 731.9,811.7" fill="none" stroke="#e0d41e" stroke-width="1"/>
<polyline points="526.1,780.0 404.8,886.5" fill="none" stroke="#8cdc1e" stroke-width="1"/>
<polyline points="546.6,803.5 437.9,892.5" fill="none" stroke="#8cdc1e" stroke-width="1"/>
<polyline points="729.9,810.1 749.4,847.9" fill="none" stroke="#8cdc1e" stroke-width="1"/>
<polyline points="621.1,812.9 623.6,846.2 648.3,879.0 720.7,872.3 749.8,845.6" fill="none" stroke="#28c8d8" stroke-width="1"/>
<polyline points="665.2,800.7 668.7,839.0" fill="none" stroke="#28d0b8" stroke-width="1"/>
</svg><!--/MAP-->
<svg class="a" style="left:0;top:360px" width="200" height="660" viewBox="0 360 200 660">
<g fill="none" stroke="#606060" stroke-width="2">
<path d="M13.5 368L10 371.5L13.5 375"/><path d="M181.5 368L185 371.5L181.5 375"/>
<path d="M180 397.5L183.5 393.5L187 397.5"/><path d="M180 988L183.5 992L187 988"/>
<path d="M13.5 1004L10 1007.5L13.5 1011"/><path d="M164.5 1004L168 1007.5L164.5 1011"/>
</g>
</svg>
<div class="a" style="left:207px;top:1009px;width:99px;height:3px;background:#fff"></div>
<div class="a" style="left:207px;top:1006px;width:1px;height:4px;background:#fff"></div>
<div class="a" style="left:305px;top:1006px;width:1px;height:4px;background:#fff"></div>
<div class="t" style="left:245px;top:996.5px;font-size:11px;color:#fff">80 m</div>
<div class="hl" style="top:1019px;background:#a0a0a0"></div>
<div class="hl" style="top:1020px;background:#fff"></div>
</body></html>
